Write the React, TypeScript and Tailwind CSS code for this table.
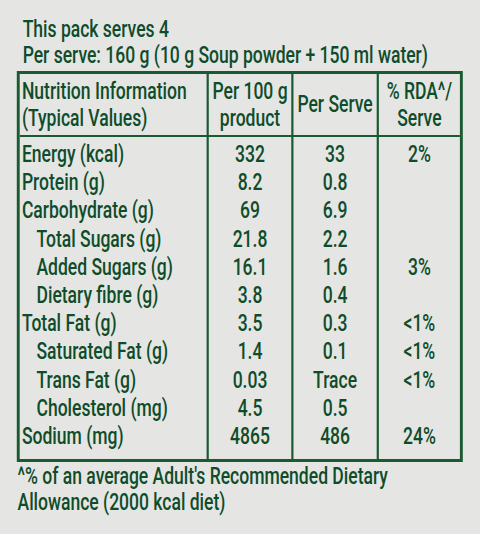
import React from 'react';

type Row = {
  label: string;
  per100: string;
  perServe: string;
  rda?: string;
  indent?: boolean;
};

const rows: Row[] = [
  { label: 'Energy (kcal)', per100: '332', perServe: '33', rda: '2%' },
  { label: 'Protein (g)', per100: '8.2', perServe: '0.8' },
  { label: 'Carbohydrate (g)', per100: '69', perServe: '6.9' },
  { label: 'Total Sugars (g)', per100: '21.8', perServe: '2.2', indent: true },
  { label: 'Added Sugars (g)', per100: '16.1', perServe: '1.6', rda: '3%', indent: true },
  { label: 'Dietary fibre (g)', per100: '3.8', perServe: '0.4', indent: true },
  { label: 'Total Fat (g)', per100: '3.5', perServe: '0.3', rda: '<1%' },
  { label: 'Saturated Fat (g)', per100: '1.4', perServe: '0.1', rda: '<1%', indent: true },
  { label: 'Trans Fat (g)', per100: '0.03', perServe: 'Trace', rda: '<1%', indent: true },
  { label: 'Cholesterol (mg)', per100: '4.5', perServe: '0.5', indent: true },
  { label: 'Sodium (mg)', per100: '4865', perServe: '486', rda: '24%' },
];

// the label face is a tall, narrow geometric sans; Roboto squeezed to 73% stands in for it
const font = { fontFamily: 'Roboto, "Liberation Sans", sans-serif' };

const App = () => {
  return (
    <div className="w-[480px] h-[534px] overflow-hidden bg-[#e5e6e4]">
      <div
        className="w-[658px] h-[534px] origin-top-left scale-x-[0.73] text-[#0f4c2a] text-[24px] font-medium whitespace-nowrap pt-[16px] pl-[23px]"
        style={font}
      >
        <div className="pl-[8px] leading-[26px]">
          <p>This pack serves 4</p>
          <p>Per serve: 160 g (10 g Soup powder + 150 ml water)</p>
        </div>

        <div className="w-[611px] mt-[3px] border-x-4 border-y-[3px] border-[#1a5a32]">
          <div className="grid grid-cols-[256px_116px_117px_114px] border-b-2 border-[#1a5a32] leading-[27px]">
            <div className="pl-[3px] pt-[4px] pb-[3px]">
              <p>Nutrition Information</p>
              <p>(Typical Values)</p>
            </div>
            <div className="border-l-[3px] border-[#1a5a32] flex flex-col items-center justify-center">
              <p>Per 100 g</p>
              <p>product</p>
            </div>
            <div className="border-l-[3px] border-[#1a5a32] flex items-center justify-center">
              Per Serve
            </div>
            <div className="border-l-[3px] border-[#1a5a32] flex flex-col items-center justify-center">
              <p>% RDA^/</p>
              <p>Serve</p>
            </div>
          </div>

          <div className="grid grid-cols-[256px_116px_117px_114px] leading-[28.2px]">
            <div className="pl-[3px] pt-[3px] pb-[9px]">
              {rows.map((r) => (
                <p key={r.label} className={r.indent ? 'pl-[20px]' : ''}>
                  {r.label}
                </p>
              ))}
            </div>
            <div className="border-l-[3px] border-[#1a5a32] pt-[3px] text-center">
              {rows.map((r) => (
                <p key={r.label}>{r.per100}</p>
              ))}
            </div>
            <div className="border-l-[3px] border-[#1a5a32] pt-[3px] text-center">
              {rows.map((r) => (
                <p key={r.label}>{r.perServe}</p>
              ))}
            </div>
            <div className="border-l-[3px] border-[#1a5a32] pt-[3px] text-center">
              {rows.map((r) => (
                <p key={r.label}>{r.rda ?? '\u00a0'}</p>
              ))}
            </div>
          </div>
        </div>

        <div className="mt-[1px] pl-[1px] leading-[26px]">
          <p>^% of an average Adult's Recommended Dietary</p>
          <p>Allowance (2000 kcal diet)</p>
        </div>
      </div>
    </div>
  );
};

export default App;
